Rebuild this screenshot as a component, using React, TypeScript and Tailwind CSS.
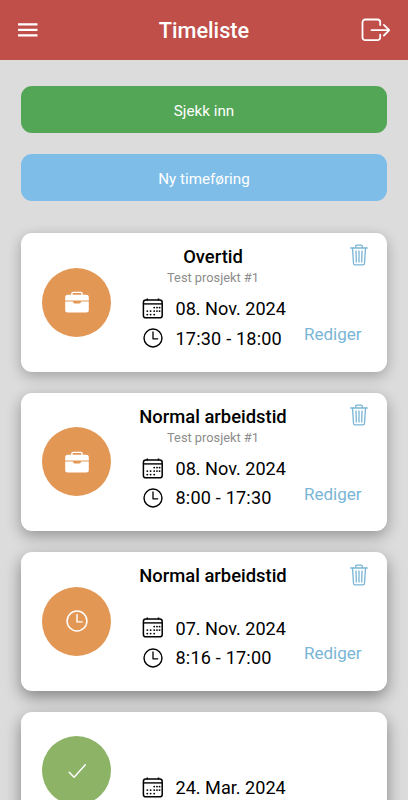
import React from "react";

type Kind = "work" | "time" | "done";
type Entry = { kind: Kind; title: string; project: string; date: string; hours: string; shadow: string };

const soft = "shadow-[0_4px_14px_rgba(0,0,0,0.27)]";
const medium = "shadow-[0_5px_15px_rgba(0,0,0,0.33)]";
const deep = "shadow-[0_6px_16px_rgba(0,0,0,0.4)]";

const entries: Entry[] = [
  { kind: "work", title: "Overtid", project: "Test prosjekt #1", date: "08. Nov. 2024", hours: "17:30 - 18:00", shadow: soft },
  { kind: "work", title: "Normal arbeidstid", project: "Test prosjekt #1", date: "08. Nov. 2024", hours: "8:00 - 17:30", shadow: medium },
  { kind: "time", title: "Normal arbeidstid", project: "", date: "07. Nov. 2024", hours: "8:16 - 17:00", shadow: deep },
  { kind: "done", title: "", project: "", date: "24. Mar. 2024", hours: "", shadow: deep },
];

function MenuIcon() {
  return (
    <svg width="20" height="14" viewBox="0 0 20 14" stroke="#fff" strokeWidth="2.1">
      <path d="M0 1.4h19.5M0 6.9h19.5M0 12.4h19.5" />
    </svg>
  );
}

function ExitIcon() {
  return (
    <svg width="30" height="24" viewBox="0 0 30 24" fill="none" stroke="#fff" strokeWidth="1.8" strokeLinecap="round" strokeLinejoin="round">
      <path d="M19.2 7V4.2a2.7 2.7 0 0 0-2.7-2.7H4.2a2.7 2.7 0 0 0-2.7 2.7v15.2a2.7 2.7 0 0 0 2.7 2.7h12.3a2.7 2.7 0 0 0 2.7-2.7v-2.8" />
      <path d="M10.5 12.2H28M22.9 6.9l5.3 5.3-5.3 5.3" />
    </svg>
  );
}

function CalendarIcon() {
  return (
    <svg width="22" height="21" viewBox="0 0 22 21" fill="none" stroke="#000">
      <rect x="1.4" y="2" width="18.8" height="17.8" rx="2.4" strokeWidth="1.5" />
      <path d="M1.6 5.9h18.4" strokeWidth="1.4" />
      <path d="M5.3 .4v2M16.5 .4v2" strokeWidth="1.5" />
      <path d="M12.2 9.6h.01M15 9.6h.01M17.6 9.6h.01M5.3 13.1h.01M8.6 13.1h.01M12.2 13.1h.01M15 13.1h.01M17.6 13.1h.01M5.3 16.6h.01M8.6 16.6h.01M12.2 16.6h.01" strokeWidth="1.9" strokeLinecap="round" />
    </svg>
  );
}

function ClockIcon({ className }: { className: string }) {
  return (
    <svg className={className} viewBox="0 0 20 20" fill="none" stroke="currentColor" strokeLinecap="round" strokeLinejoin="round">
      <circle cx="10" cy="10" r="9" strokeWidth="1.4" />
      <path d="M10 4v6.8h4.7" strokeWidth="1.3" />
    </svg>
  );
}

function BriefcaseIcon() {
  return (
    <svg width="26" height="22" viewBox="0 0 26 22" fill="#fff">
      <path d="M7.2 3.8V2.5A1.8 1.8 0 0 1 9 .7h8a1.8 1.8 0 0 1 1.8 1.8v1.3H22.3a2.5 2.5 0 0 1 2.5 2.5v3.1H1.2V6.3a2.5 2.5 0 0 1 2.5-2.5zM8.7 3.8h8.6V2.6a.5.5 0 0 0-.5-.5H9.2a.5.5 0 0 0-.5.5z" fillRule="evenodd" />
      <path d="M1.2 10.6h7.9v.4a1.4 1.4 0 0 0 1.4 1.4h5a1.4 1.4 0 0 0 1.4-1.4v-.4h7.9v8.4a2.5 2.5 0 0 1-2.5 2.5H3.7a2.5 2.5 0 0 1-2.5-2.5z" />
    </svg>
  );
}

function CheckIcon() {
  return (
    <svg width="20" height="16" viewBox="0 0 20 16" fill="none" stroke="#fff" strokeWidth="1.5" strokeLinecap="round" strokeLinejoin="round">
      <path d="M2.2 9.3l4.9 5L18.3 1.7" />
    </svg>
  );
}

function TrashIcon() {
  return (
    <svg width="18" height="22" viewBox="0 0 18 22" fill="none" stroke="#79b5d6" strokeWidth="1.3" strokeLinecap="round" strokeLinejoin="round">
      <path d="M.8 4h16.4M2.5 4l1 15.3c.1 1 .6 1.6 1.5 1.6h8c.9 0 1.4-.6 1.5-1.6l1-15.3M5.7 4V2.3c0-.8.4-1.2 1.2-1.2h4.2c.8 0 1.2.4 1.2 1.2V4" />
      <path d="M9 7v11M6 7l.3 11M12 7l-.3 11" />
    </svg>
  );
}

function Status({ kind }: { kind: Kind }) {
  const color = kind === "done" ? "bg-[#8db367]" : "bg-[#e39755]";
  return (
    <div className={`flex size-[69px] shrink-0 items-center justify-center rounded-full text-white ${color}`}>
      {kind === "work" && <BriefcaseIcon />}
      {kind === "time" && <ClockIcon className="size-[22px]" />}
      {kind === "done" && <CheckIcon />}
    </div>
  );
}

function Card({ entry }: { entry: Entry }) {
  const done = entry.kind === "done";
  return (
    <article className={`flex shrink-0 rounded-[11px] bg-white pl-[21px] ${entry.shadow} ${done ? "h-[118px]" : "h-[138.6px]"}`}>
      <div className="flex items-center"><Status kind={entry.kind} /></div>
      <div className="ml-[22px] flex w-[160px] flex-col pt-[12px]">
        <h2 className="h-6 shrink-0 text-center text-[18.4px] leading-6 font-medium whitespace-nowrap">{entry.title}</h2>
        <p className="h-[18px] shrink-0 text-center text-[12.8px] leading-[18px] text-[#8c8c8c]">{entry.project}</p>
        <div className="mt-[6.5px] flex h-[30px] shrink-0 items-center pl-[9px]">
          <CalendarIcon />
          <span className="ml-[11.5px] pt-px text-[18.1px] whitespace-nowrap">{entry.date}</span>
        </div>
        <div className="flex h-[30px] shrink-0 items-center pl-[10px]">
          {!done && <ClockIcon className="size-5" />}
          <span className="ml-[12.5px] text-[18.1px] tracking-[0.18px] whitespace-nowrap">{entry.hours}</span>
        </div>
      </div>
      {!done && (
        <div className="ml-[11px] flex w-[64px] flex-col pt-[11.5px] text-[#79b5d6]">
          <button className="self-end"><TrashIcon /></button>
          <a className="mt-[55.5px] text-[17px] leading-6">Rediger</a>
        </div>
      )}
    </article>
  );
}

export default function App() {
  return (
    <div className="flex h-[800px] w-[408px] flex-col overflow-hidden bg-[#dcdcdc] font-['Roboto','Liberation_Sans',sans-serif] text-black">
      <header className="flex h-[60px] shrink-0 items-center justify-between bg-[#c04e49] pr-[17px] pl-[18px] text-white">
        <div className="flex w-[30px]"><MenuIcon /></div>
        <h1 className="pt-[3px] pr-[1px] text-[21.7px] font-medium">Timeliste</h1>
        <ExitIcon />
      </header>
      <main className="flex flex-col px-[21px] pt-[26.4px]">
        <button className="h-[46.6px] shrink-0 rounded-[11px] bg-[#53a656] pt-[3px] text-[15.2px] text-white">Sjekk inn</button>
        <button className="mt-[21.4px] h-[46.6px] shrink-0 rounded-[11px] bg-[#7dbde8] pt-[3px] text-[15.2px] text-white">Ny timeføring</button>
        <div className="mt-[32px] flex flex-col gap-[21px]">
          {entries.map((entry, i) => <Card key={i} entry={entry} />)}
        </div>
      </main>
    </div>
  );
}
